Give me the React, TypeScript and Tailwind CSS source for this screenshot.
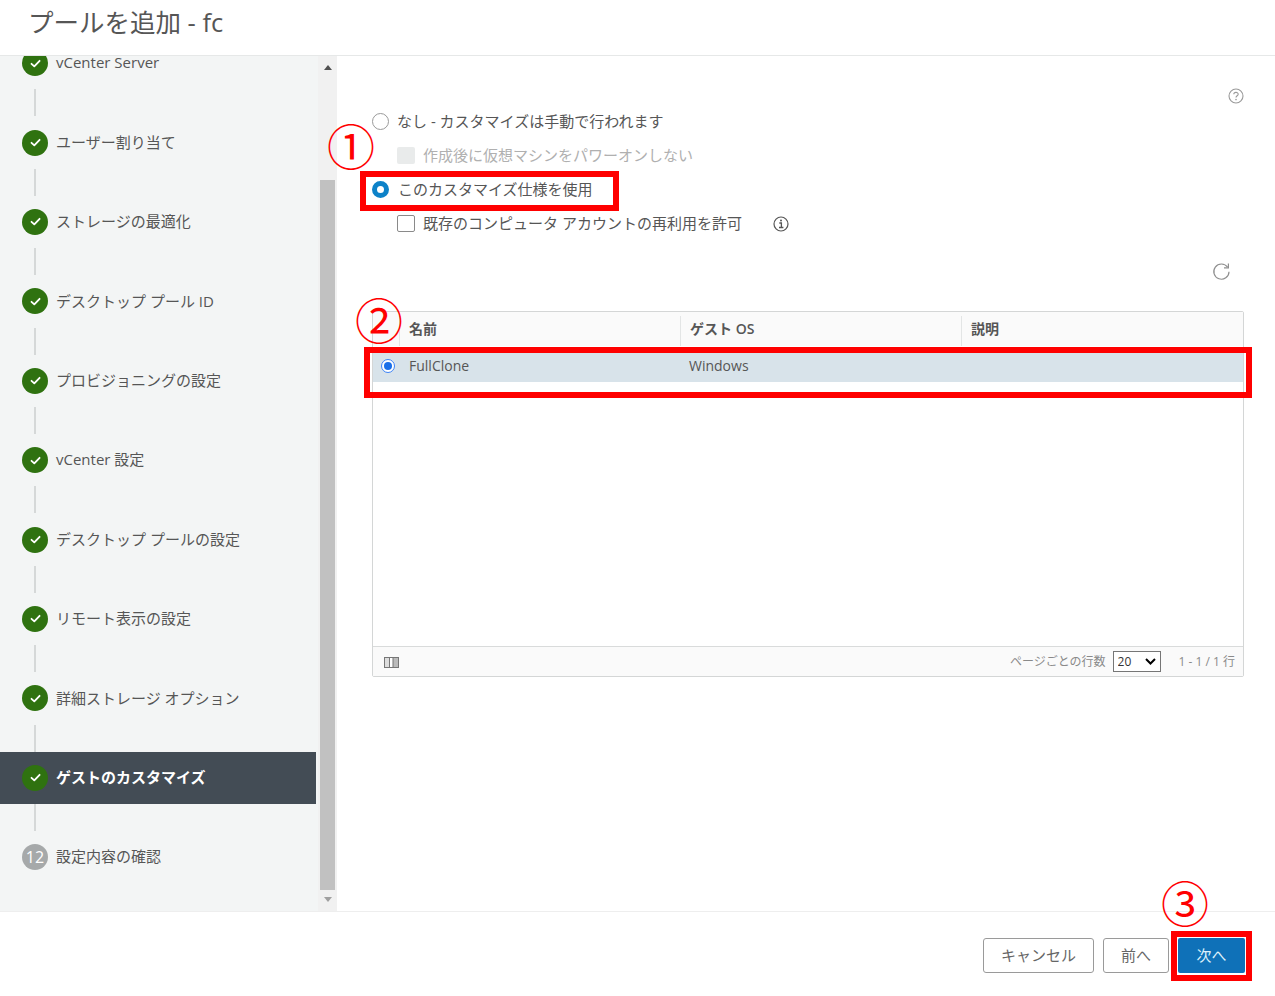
import React from "react";

const FONT = "[font-family:'Open_Sans','Noto_Sans_CJK_JP',sans-serif]";

function Check() {
  return (
    <span className="flex h-[26px] w-[26px] shrink-0 items-center justify-center rounded-full bg-[#2f7210]">
      <svg width="13" height="13" viewBox="0 0 13 13" fill="none">
        <path d="M2.5 6.8 L5.3 9.4 L10.6 3.8" stroke="#fff" strokeWidth="1.8" strokeLinecap="round" strokeLinejoin="round" />
      </svg>
    </span>
  );
}

function Connector() {
  return <div className="ml-[34px] h-[27px] w-[2px] bg-[#d5d8d8]" />;
}

function Step({ label, active, num }: { label: string; active?: boolean; num?: string }) {
  return (
    <div
      className={
        "flex h-[52.4px] items-center gap-[8px] pl-[22px] text-[15px] " +
        (active ? "bg-[#434c55] font-bold text-white" : "text-[#565656]")
      }
    >
      {num ? (
        <span className="flex h-[26px] w-[26px] shrink-0 items-center justify-center rounded-full bg-[#a6a9aa] text-[16px] text-white">
          {num}
        </span>
      ) : (
        <Check />
      )}
      <span className="-mt-[1px] whitespace-nowrap">{label}</span>
    </div>
  );
}

const steps = [
  "vCenter Server",
  "ユーザー割り当て",
  "ストレージの最適化",
  "デスクトップ プール ID",
  "プロビジョニングの設定",
  "vCenter 設定",
  "デスクトップ プールの設定",
  "リモート表示の設定",
  "詳細ストレージ オプション",
];

function Radio({ checked }: { checked?: boolean }) {
  return checked ? (
    <span className="block h-[17px] w-[17px] shrink-0 rounded-full border-[5px] border-[#0d82c8] bg-white" />
  ) : (
    <span className="block h-[17px] w-[17px] shrink-0 rounded-full border border-[#9a9a9a] bg-white" />
  );
}

function Box({ disabled }: { disabled?: boolean }) {
  return (
    <span
      className={
        "block h-[17px] w-[18px] shrink-0 rounded-[2px] " +
        (disabled ? "bg-[#e9ebeb]" : "border border-[#8a8a8a] bg-white")
      }
    />
  );
}

function Mark({ className, children }: { className: string; children: string }) {
  return (
    <span className={"pointer-events-none absolute text-[48px] leading-none text-[#ff0000] [font-family:'Noto_Sans_CJK_JP',sans-serif] " + className}>
      {children}
    </span>
  );
}

export default function App() {
  return (
    <div className={"relative flex h-[996px] w-[1275px] flex-col overflow-hidden bg-white " + FONT}>
      <header className="flex h-[56px] shrink-0 items-center border-b border-[#e6e8e8] pb-[9px] pl-[28px] text-[25.5px] leading-none text-[#565656]">
        プールを追加 - fc
      </header>

      <div className="flex h-[855px] shrink-0">
        <aside className="h-full w-[318px] shrink-0 overflow-hidden bg-[#f3f5f5]">
          <div className="-mt-[19px] pr-[2px]">
            {steps.map((s) => (
              <React.Fragment key={s}>
                <Step label={s} />
                <Connector />
              </React.Fragment>
            ))}
            <Step label="ゲストのカスタマイズ" active />
            <Connector />
            <Step label="設定内容の確認" num="12" />
          </div>
        </aside>

        <div className="flex h-full w-[19px] shrink-0 flex-col items-center bg-[#f1f1f1] px-[2px]">
          <div className="mt-[9px] h-0 w-0 border-x-[4px] border-b-[5px] border-x-transparent border-b-[#505050]" />
          <div className="mt-[110px] h-[710px] w-full bg-[#c1c1c1]" />
          <div className="mt-[7px] h-0 w-0 border-x-[4px] border-t-[5px] border-x-transparent border-t-[#a0a0a0]" />
        </div>

        <main className="flex min-w-0 flex-1 flex-col pl-[35px] pr-[31px]">
          <div className="flex h-[47px] items-end justify-end">
            <svg width="16" height="16" viewBox="0 0 16 16" fill="none" className="mb-[-1px] mr-[0.5px]">
              <circle cx="8" cy="8" r="7" stroke="#9a9a9a" strokeWidth="1.1" />
              <path d="M5.8 6.3 C5.8 3.8 10.2 3.8 10.2 6.2 C10.2 7.8 8 7.8 8 9.6" stroke="#9a9a9a" strokeWidth="1.1" fill="none" />
              <circle cx="8" cy="11.6" r="0.8" fill="#9a9a9a" />
            </svg>
          </div>

          <div className="mt-[2px] flex h-[33px] items-center text-[15px] text-[#565656]">
            <Radio />
            <span className="ml-[8px]">なし - カスタマイズは手動で行われます</span>
          </div>
          <div className="flex h-[34px] items-center pl-[25px] text-[15px] text-[#b0b0b0]">
            <Box disabled />
            <span className="ml-[8px]">作成後に仮想マシンをパワーオンしない</span>
          </div>
          <div className="flex h-[34px] items-center text-[15px] text-[#565656]">
            <Radio checked />
            <span className="ml-[9px]">このカスタマイズ仕様を使用</span>
          </div>
          <div className="flex h-[34px] items-center pl-[25px] text-[15px] text-[#565656]">
            <Box />
            <span className="ml-[8px]">既存のコンピュータ アカウントの再利用を許可</span>
            <svg width="16" height="16" viewBox="0 0 16 16" fill="none" className="ml-[31px] mt-[2px]">
              <circle cx="8" cy="8" r="7" stroke="#555" strokeWidth="1.2" />
              <circle cx="8" cy="4.6" r="1" fill="#555" />
              <path d="M6.3 7 H8.4 V11.5 M6 11.5 H10.4" stroke="#555" strokeWidth="1.3" />
            </svg>
          </div>

          <div className="mt-[22px] flex h-[18px] justify-end pr-[13px]">
            <svg width="19" height="19" viewBox="0 0 19 19" fill="none">
              <path d="M15.6 5.2 A7.6 7.6 0 1 0 17 9.7" stroke="#8f8f8f" strokeWidth="1.2" fill="none" />
              <path d="M16.4 1.4 V5.8 H12" stroke="#8f8f8f" strokeWidth="1.2" fill="none" />
            </svg>
          </div>

          <section className="mt-[31px] flex h-[366px] flex-col rounded-[2px] border border-[#d4d6d6] bg-white">
            <div className="flex h-[34px] shrink-0 items-stretch bg-[#fafafa] pt-[4px] text-[14px] font-bold text-[#565656]">
              <div className="w-[27px] border-r border-[#e3e5e5]" />
              <div className="flex w-[281px] items-center border-r border-[#e3e5e5] pb-[6px] pl-[9px]">名前</div>
              <div className="flex w-[281px] items-center border-r border-[#e3e5e5] pb-[6px] pl-[9px] [font-weight:600]">ゲスト OS</div>
              <div className="flex flex-1 items-center pb-[6px] pl-[9px]">説明</div>
            </div>
            <div className="mt-[5px] flex h-[31px] shrink-0 items-center bg-[#d8e3ea] pb-[2px] text-[14px] text-[#565656]">
              <div className="flex w-[26px] justify-center pl-[4px]">
                <span className="flex h-[14px] w-[14px] items-center justify-center rounded-full border border-[#3b82f6] bg-white">
                  <span className="h-[8px] w-[8px] rounded-full bg-[#1a6fe8]" />
                </span>
              </div>
              <div className="w-[281px] pl-[10px]">FullClone</div>
              <div className="flex-1 pl-[9px]">Windows</div>
            </div>
            <div className="flex-1" />
            <div className="flex h-[30px] shrink-0 items-center justify-between border-t border-[#d9dbdb] bg-[#fafafa] pl-[11px] pr-[8px] text-[12px] text-[#8a8a8a]">
              <svg width="15" height="11" viewBox="0 0 15 11" fill="none" className="mt-[1px]">
                <rect x="0.5" y="0.5" width="14" height="10" stroke="#777" fill="#fff" />
                <rect x="0.5" y="0.5" width="5" height="10" stroke="#777" fill="#ddd" />
                <rect x="9" y="0.5" width="5.5" height="10" stroke="#777" fill="#bbb" />
              </svg>
              <div className="flex items-center">
                <span>ページごとの行数</span>
                <div className="relative ml-[7px] h-[21px] w-[48px]">
                  <select
                    defaultValue="20"
                    className="h-full w-full appearance-none rounded-none border border-[#767676] bg-white pl-[4px] text-[12px] text-[#333]"
                  >
                    <option>20</option>
                  </select>
                  <svg width="11" height="7" viewBox="0 0 11 7" fill="none" className="pointer-events-none absolute right-[5px] top-[7px]">
                    <path d="M1 1 L5.5 5.5 L10 1" stroke="#000" strokeWidth="2" />
                  </svg>
                </div>
                <span className="ml-[18px]">1 - 1 / 1 行</span>
              </div>
            </div>
          </section>
        </main>
      </div>

      <footer className="flex h-[85px] shrink-0 items-start justify-end gap-[9px] border-t border-[#eeeeee] pr-[30px] pt-[26px] text-[15px]">
        <button className="flex h-[35px] w-[111px] items-center justify-center rounded-[3px] border border-[#9a9a9a] bg-white text-[#666]">
          キャンセル
        </button>
        <button className="flex h-[35px] w-[66px] items-center justify-center rounded-[3px] border border-[#9a9a9a] bg-white text-[#666]">
          前へ
        </button>
        <button className="flex h-[35px] w-[67px] items-center justify-center rounded-[2px] bg-[#0f71b8] text-[#dff1fb]">
          次へ
        </button>
      </footer>

      <Mark className="left-[327px] top-[120px]">①</Mark>
      <Mark className="left-[355px] top-[294px]">②</Mark>
      <Mark className="left-[1161px] top-[877px]">③</Mark>
      <div className="pointer-events-none absolute left-[360px] top-[171px] h-[40px] w-[259px] border-[6px] border-[#ff0000]" />
      <div className="pointer-events-none absolute left-[364px] top-[347px] h-[51px] w-[888px] border-[6px] border-[#ff0000]" />
      <div className="pointer-events-none absolute left-[1171px] top-[931px] h-[50px] w-[81px] border-[6px] border-[#ff0000]" />
    </div>
  );
}
